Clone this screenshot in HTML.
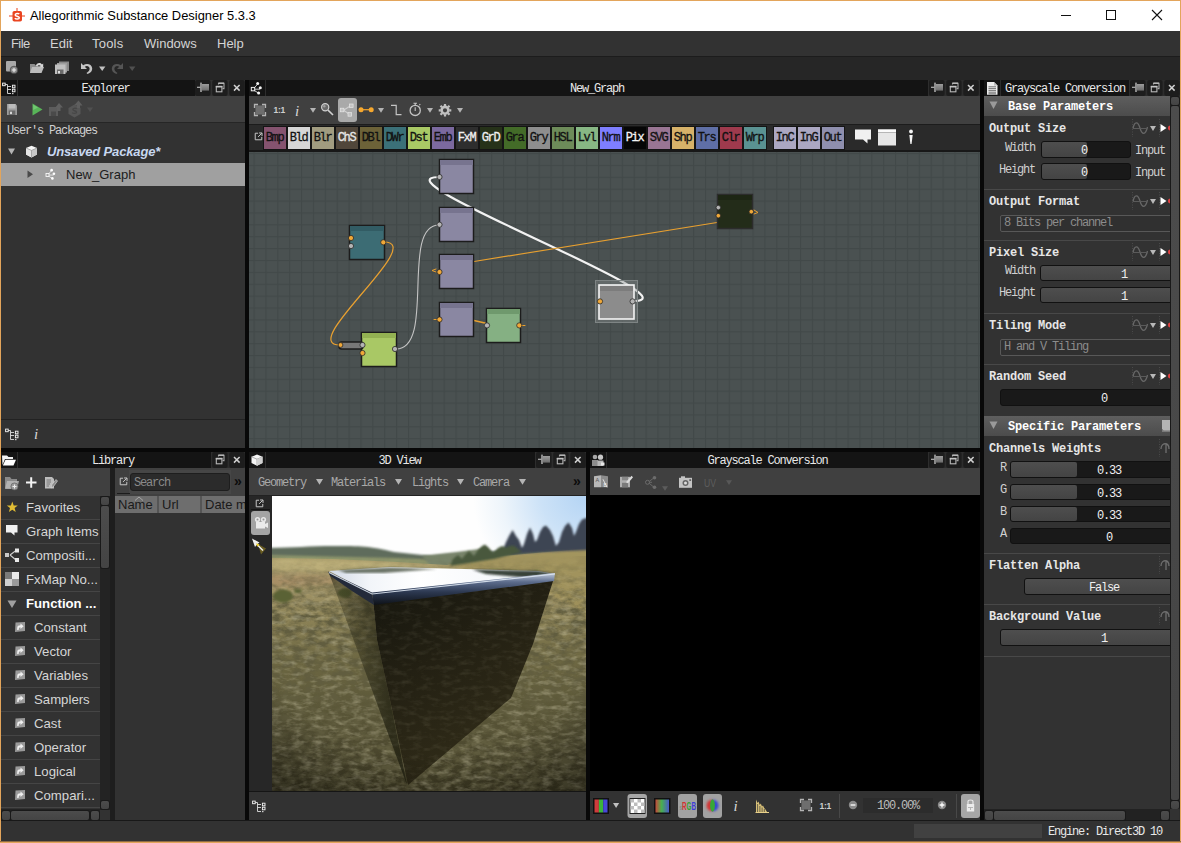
<!DOCTYPE html>
<html>
<head>
<meta charset="utf-8">
<title>Allegorithmic Substance Designer 5.3.3</title>
<style>
*{box-sizing:border-box;margin:0;padding:0}
html,body{width:1181px;height:843px;overflow:hidden;background:#e3a55b}
body{position:relative;font-family:"Liberation Sans",sans-serif;font-size:13px;color:#d8d8d8}
.abs,.abs-c>*{position:absolute}
#win{position:absolute;left:0;top:0;width:1181px;height:843px;background:#2d2d2d;overflow:hidden}
#win *{position:absolute}
.ss{font-family:"Liberation Mono",monospace;font-size:12px;letter-spacing:-1.2px;white-space:pre;line-height:14px;color:#d0d0d0}
.ssb{font-family:"Liberation Mono",monospace;font-size:12px;font-weight:bold;letter-spacing:-0.2px;white-space:pre;line-height:14px;color:#e6e6e6}
.ui{font-family:"Liberation Sans",sans-serif;font-size:13px;white-space:pre;color:#d4d4d4}
.dt{background:#141414;height:16px}
.dti{background:#141414;width:16px;height:16px}
.dtt{background:#141414;height:16px;text-align:center;color:#e8e8e8;overflow:hidden}
.db{background:#1b1b1b;width:16px;height:16px;border:1px solid #0c0c0c;border-radius:2px}
.tb{background:#404040}
.pnl{background:#323232}
.sep{background:#080808}
.lh{line-height:18px;font-size:13px}
.lr{line-height:18px;font-size:13.2px;color:#d6d6d6}
.sech{width:186px;height:20px;background:linear-gradient(#5e5e5e,#4c4c4c)}
.fld{background:#191919;border:1px solid #111;border-radius:3px}
.fill{background:linear-gradient(#4e4e4e,#444);border-radius:2px}
.val{text-align:center;color:#f0f0f0}
.cmb{height:17px;border:1px solid #585858;border-radius:2px;background:#303030;color:#8c8c8c;line-height:15px;padding-left:3px}
.sbt{background:linear-gradient(#4c4c4c,#444);border-radius:2px;box-shadow:0 0 0 1px #191919}
.pb{top:126px;width:24px;height:24px;border:1px solid #151515;text-align:center;line-height:22px;letter-spacing:-1.4px;text-indent:-1px;-webkit-text-stroke:0.3px currentColor}
</style>
</head>
<body>
<div id="win">
<svg width="0" height="0" style="left:0;top:0">
<defs>
<linearGradient id="pg" x1="0" y1="0" x2="0" y2="1"><stop offset="0" stop-color="#9c9c9c"/><stop offset="1" stop-color="#6c6c6c"/></linearGradient>
<symbol id="dbtn" viewBox="0 0 50 16">
<rect x="0" y="0" width="15.6" height="16" rx="2" fill="#1d1d1d"/><rect x="17.2" y="0" width="15.4" height="16" rx="2" fill="#1d1d1d"/><rect x="34.3" y="0" width="15.5" height="16" rx="2" fill="#1d1d1d"/>
<path d="M2,7.3H5.5" stroke="#b4b4b4" stroke-width="1.2"/><rect x="5.2" y="2.6" width="1.6" height="9.4" fill="#a8a8a8"/><rect x="6.8" y="4" width="7.2" height="6.6" fill="url(#pg)"/>
<path d="M23.5,4.6V3.4H29V8.6H27.6" fill="none" stroke="#a8a8a8" stroke-width="1.1"/><path d="M23.5,3.2H29" stroke="#b8b8b8" stroke-width="1.4"/>
<rect x="21.3" y="6.6" width="5.6" height="5.2" fill="none" stroke="#b8b8b8" stroke-width="1.1"/><path d="M20.8,6.6H27.4" stroke="#c4c4c4" stroke-width="1.6"/>
<path d="M39,5L44.6,10.6M44.6,5L39,10.6" stroke="#d0d0d0" stroke-width="1.5"/>
</symbol>
<symbol id="dbtn2" viewBox="17 0 33 16">
<rect x="17.2" y="0" width="15.4" height="16" rx="2" fill="#1d1d1d"/><rect x="34.3" y="0" width="15.5" height="16" rx="2" fill="#1d1d1d"/>
<path d="M23.5,4.6V3.4H29V8.6H27.6" fill="none" stroke="#a8a8a8" stroke-width="1.1"/><path d="M23.5,3.2H29" stroke="#b8b8b8" stroke-width="1.4"/>
<rect x="21.3" y="6.6" width="5.6" height="5.2" fill="none" stroke="#b8b8b8" stroke-width="1.1"/><path d="M20.8,6.6H27.4" stroke="#c4c4c4" stroke-width="1.6"/>
<path d="M39,5L44.6,10.6M44.6,5L39,10.6" stroke="#d0d0d0" stroke-width="1.5"/>
</symbol>
<symbol id="tri" viewBox="0 0 6 5"><path d="M0,0H6L3,4.8Z" fill="#b4b4b4"/></symbol>
<symbol id="gicon" viewBox="0 0 16 16">
<path d="M4,9.2L9,3.8M5,9.2H11M4.5,10L10,13.4" stroke="#d8d8d8" stroke-width="0.9" fill="none"/>
<rect x="2.3" y="7.4" width="3.4" height="3.4" fill="#222" stroke="#f0f0f0" stroke-width="1"/>
<circle cx="8.7" cy="3.6" r="1.5" fill="#f4f4f4"/><circle cx="11.3" cy="7.7" r="1.5" fill="#f4f4f4"/><circle cx="9.6" cy="13" r="1.5" fill="#f4f4f4"/>
</symbol>
</defs></svg>
<!-- TITLE BAR -->
<div id="titlebar" style="left:0;top:0;width:1181px;height:31px;background:#fff"></div>
<div id="title" class="ui" style="left:30px;top:7px;font-size:12.9px;color:#000;line-height:18px">Allegorithmic Substance Designer 5.3.3</div>
<!-- MENU BAR -->
<div id="menubar" style="left:0;top:31px;width:1181px;height:25px;background:#323232"></div>
<div class="ui" style="left:11px;top:35px;line-height:17px;letter-spacing:-0.6px">File</div>
<div class="ui" style="left:50px;top:35px;line-height:17px">Edit</div>
<div class="ui" style="left:92px;top:35px;line-height:17px;letter-spacing:0.2px">Tools</div>
<div class="ui" style="left:144px;top:35px;line-height:17px">Windows</div>
<div class="ui" style="left:217px;top:35px;line-height:17px">Help</div>
<!-- MAIN TOOLBAR -->
<div id="maintb" style="left:0;top:56px;width:1181px;height:24px;background:#262626;border-top:1px solid #1c1c1c"></div>
<!-- app icon & window controls -->
<svg style="left:8px;top:7px" width="18" height="18" viewBox="0 0 18 18"><path d="M1,9H17M9,1V4" stroke="#e8431c" stroke-width="1"/><rect x="4.5" y="4" width="9.5" height="10.5" rx="1.8" fill="#ea4420"/><path d="M11.2,7.2C10.6,6.2 7.2,6.1 7.2,7.9C7.2,9.6 11.3,8.9 11.3,10.8C11.3,12.5 7.6,12.4 6.9,11.2" fill="none" stroke="#fff" stroke-width="1.5"/></svg>
<svg style="left:1050px;top:5px" width="125" height="22" viewBox="1050 5 125 22"><path d="M1061,15.5H1071" stroke="#111" stroke-width="1"/><rect x="1106.5" y="10.5" width="9" height="9" fill="none" stroke="#111" stroke-width="1"/><path d="M1152,10L1162,20M1162,10L1152,20" stroke="#111" stroke-width="1.1"/></svg>
<!-- main toolbar icons -->
<svg style="left:1px;top:57px" width="140" height="22" viewBox="1 57 140 22">
<rect x="6" y="61" width="10" height="10.5" rx="1" fill="#a8a8a8"/><circle cx="14" cy="70" r="3.8" fill="#8c8c8c" stroke="#3a3a3a" stroke-width="0.7"/><path d="M12,70H16M14,68V72" stroke="#eee" stroke-width="1.1"/>
<path d="M30,64H34.5L36,65.5H41V73H30Z" fill="#8e8e8e"/><path d="M32,67H44L41.5,73H30Z" fill="#bcbcbc"/><path d="M36,66C36,62.5 41,62 42,64.5L43.2,63.5V67.2H39.6L40.8,66.2C40,64.6 37.6,64.8 37.6,66.6Z" fill="#d8d8d8"/>
<path d="M59,61.5H69V71H59Z" fill="#8a8a8a"/><path d="M57,63H67V72.5H57Z" fill="#9e9e9e"/><path d="M55,64.5H65.5V74H55Z" fill="#c0c0c0"/><rect x="57" y="69.5" width="6.5" height="4.5" fill="#6a6a6a"/><rect x="58" y="71" width="2" height="2.5" fill="#ddd"/>
<path d="M81,63V69H87L84.8,66.8C86.5,65.3 89.5,66 89.6,68.6C89.7,70.6 88.5,72 86.5,73L87.5,74C90.8,72.8 92.4,70.8 92.2,68.2C91.9,64 86.6,62.6 83.2,65.2Z" fill="#c4c4c4"/>
<path d="M99,66.5H105.4L102.2,71Z" fill="#c0c0c0"/>
<path d="M123,63V69H117L119.2,66.8C117.5,65.3 114.5,66 114.4,68.6C114.3,70.6 115.5,72 117.5,73L116.5,74C113.2,72.8 111.6,70.8 111.8,68.2C112.1,64 117.4,62.6 120.8,65.2Z" fill="#555"/>
<path d="M129,66.5H135.4L132.2,71Z" fill="#505050"/>
</svg>
<!-- PANELS inserted below -->
<!--EXPLORER-->
<div class="pnl" style="left:1px;top:80px;width:244px;height:368px"></div>
<div class="dti" style="left:1px;top:80px"></div>
<div class="dtt ss" style="left:18px;top:80px;width:177px;line-height:19px;text-indent:-2px">Explorer</div>
<svg style="left:195px;top:80px" width="50" height="16"><use href="#dbtn"/></svg>
<div class="tb" style="left:1px;top:96px;width:244px;height:27px;border-bottom:1px solid #262626"></div>
<div class="ss" style="left:7px;top:124px">User's Packages</div>
<div class="ui" style="left:47px;top:143px;line-height:17px;font-style:italic;font-weight:bold;color:#c8d8f0;font-size:13px;letter-spacing:-0.15px">Unsaved Package*</div>
<div style="left:1px;top:163px;width:244px;height:23px;background:#a0a0a0"></div>
<div class="ui" style="left:66px;top:166px;line-height:17px;color:#1c1c1c;font-size:13px">New_Graph</div>
<div style="left:1px;top:419px;width:244px;height:1px;background:#222"></div>
<div style="left:34px;top:425px;font-family:'Liberation Serif',serif;font-style:italic;font-size:15px;line-height:18px;color:#d8d8d8">i</div>
<svg style="left:2px;top:82px" width="15" height="14" viewBox="0 0 15 14"><path d="M3,2.5H5.5V11.5H9M5.5,4.5H9M5.5,7.5H9" fill="none" stroke="#dcdcdc" stroke-width="0.9"/><rect x="0.6" y="1.1" width="2.6" height="2.6" fill="#333" stroke="#f4f4f4" stroke-width="0.9"/><rect x="10.4" y="3.2" width="2.6" height="2.6" fill="#333" stroke="#f4f4f4" stroke-width="0.9"/><rect x="10.4" y="7.2" width="2.6" height="2.6" fill="#333" stroke="#f4f4f4" stroke-width="0.9"/><rect x="10.2" y="11" width="1.2" height="1.2" fill="#f4f4f4"/></svg>
<svg style="left:1px;top:96px" width="110" height="27" viewBox="1 96 110 27">
<path d="M7,104H15.5L17,105.5V115H7Z" fill="#9c9c9c"/><rect x="8.5" y="104" width="7" height="4.5" fill="#bcbcbc"/><rect x="8.7" y="110.5" width="6.6" height="4.5" fill="#6a6a6a"/><rect x="10" y="111.7" width="2" height="2.4" fill="#d8d8d8"/>
<path d="M32.5,103.5L42.5,109.5L32.5,115.5Z" fill="#58b458"/><path d="M33.2,104.8L38,107.6L33.2,110Z" fill="#7ed07e" opacity="0.7"/>
<path d="M49,107H58V116H49Z" fill="#5c5c5c"/><rect x="51" y="111.5" width="5" height="4.5" fill="#4a4a4a"/><path d="M55,108L59,103L63,107.5L60.5,107.5V111H57V107.8Z" fill="#606060"/>
<path d="M74.5,104.5L80.5,108V114L74.5,117.5L68.5,114V108Z" fill="#565656"/><path d="M76.8,108.9C76,108 72.8,107.9 72.8,109.6C72.8,111 76.6,110.5 76.6,112.2C76.6,113.7 73,113.7 72.2,112.6" fill="none" stroke="#474747" stroke-width="1.3"/><path d="M74.5,105L78.5,100.5L82.5,105.5H80V108H77V105.5Z" fill="#5e5e5e"/>
<path d="M87,107.5H93L90,112Z" fill="#505050"/>
</svg>
<svg style="left:8px;top:148px" width="8" height="7"><path d="M0,0.5H7L3.5,6.5Z" fill="#b4b4b4"/></svg>
<svg style="left:25px;top:145px" width="13" height="13" viewBox="0 0 13 13"><path d="M6.5,0.8L12,3V9.6L6.5,12.4L1,9.6V3Z" fill="#f6f6f6"/><path d="M6.5,5.4L12,3V9.6L6.5,12.4Z" fill="#c8c8c8"/><path d="M1,3L6.5,5.4V12.4L1,9.6Z" fill="#e4e4e4"/><path d="M1,3L6.5,5.4L12,3M6.5,5.4V12.4" stroke="#8c8c8c" stroke-width="0.7" fill="none"/></svg>
<svg style="left:27px;top:170px" width="7" height="9"><path d="M0.5,0.5L6,4.2L0.5,8Z" fill="#4a4a4a"/></svg>
<svg style="left:44px;top:167px" width="14" height="14" viewBox="0 0 16 16"><path d="M4,9.2L9,3.8M5,9.2H11M4.5,10L10,13.4" stroke="#f0f0f0" stroke-width="0.9" fill="none"/>
<rect x="2.3" y="7.4" width="3.4" height="3.4" fill="#a0a0a0" stroke="#fafafa" stroke-width="1"/>
<circle cx="8.7" cy="3.6" r="1.5" fill="#fff"/><circle cx="11.3" cy="7.7" r="1.5" fill="#fff"/><circle cx="9.6" cy="13" r="1.5" fill="#fff"/></svg>
<svg style="left:5px;top:428px" width="15" height="14" viewBox="0 0 15 14"><path d="M3,2.5H5.5V11.5H9M5.5,4.5H9M5.5,7.5H9" fill="none" stroke="#dcdcdc" stroke-width="0.9"/><rect x="0.6" y="1.1" width="2.6" height="2.6" fill="#333" stroke="#f4f4f4" stroke-width="0.9"/><rect x="10.4" y="3.2" width="2.6" height="2.6" fill="#333" stroke="#f4f4f4" stroke-width="0.9"/><rect x="10.4" y="7.2" width="2.6" height="2.6" fill="#333" stroke="#f4f4f4" stroke-width="0.9"/><rect x="10.2" y="11" width="1.2" height="1.2" fill="#f4f4f4"/></svg>
<div class="sep" style="left:245px;top:80px;width:4px;height:740px"></div>
<div class="sep" style="left:1px;top:448px;width:245px;height:4px"></div>
<!--GRAPH-->
<div class="dti" style="left:249px;top:80px"></div>
<div class="dtt ss" style="left:266px;top:80px;width:662px;line-height:19px">New_Graph</div>
<svg style="left:929px;top:80px" width="50" height="16"><use href="#dbtn"/></svg>
<svg style="left:249px;top:80px" width="16" height="16"><use href="#gicon"/></svg>
<div class="tb" style="left:249px;top:96px;width:731px;height:28px"></div>
<div style="left:338px;top:98px;width:19px;height:24px;background:#a9a9a9;border-radius:3px"></div>
<svg style="left:249px;top:96px" width="240" height="28" viewBox="249 96 240 28">
<rect x="255.5" y="105.5" width="9" height="9" fill="#6e6e6e"/>
<path d="M254.5,108V104.5H258M262,104.5H265.5V108M265.5,112V115.5H262M258,115.5H254.5V112" fill="none" stroke="#b4b4b4" stroke-width="1.3"/>
<text x="273.5" y="113.2" font-family="Liberation Sans,sans-serif" font-weight="bold" font-size="8.5" fill="#cfcfcf" letter-spacing="-0.3">1:1</text>
<text x="295" y="115.5" font-family="Liberation Serif,serif" font-style="italic" font-size="15" fill="#d8d8d8">i</text>
<use href="#tri" x="310" y="108" width="6" height="5"/>
<circle cx="325.2" cy="107.3" r="3.6" fill="#6a6a6a" stroke="#d0d0d0" stroke-width="1.2"/><circle cx="324.3" cy="106.3" r="1.2" fill="#a0a0a0"/>
<path d="M328,110.2L333,115" stroke="#d0d0d0" stroke-width="1.6"/>
<path d="M343.5,110.2L351,105.5M344,110.5L349,114" stroke="#d0d0d0" stroke-width="1.1" fill="none"/>
<rect x="340.3" y="108.2" width="3.6" height="3.6" fill="#c4c4c4" stroke="#e6e6e6" stroke-width="0.7"/><rect x="349.5" y="104" width="3.6" height="3.6" fill="#c4c4c4" stroke="#e6e6e6" stroke-width="0.7"/><rect x="348" y="112.6" width="3.6" height="3.6" fill="#c4c4c4" stroke="#e6e6e6" stroke-width="0.7"/>
<path d="M361,109.7H371" stroke="#f0a22c" stroke-width="1.2"/><circle cx="361" cy="109.7" r="2.5" fill="#f6a82e"/><circle cx="371.2" cy="109.7" r="2.5" fill="#f6a82e"/>
<use href="#tri" x="378" y="108" width="6" height="5"/>
<path d="M391,105.4H396.2V114.6H401.5" fill="none" stroke="#c4c4c4" stroke-width="1.2"/>
<circle cx="415.2" cy="110.4" r="5.1" fill="none" stroke="#c4c4c4" stroke-width="1.3"/><path d="M413.5,103.2H417M415.2,103.5V105.4M415.2,107.2V111M419.3,105.2L420.3,104.2" stroke="#c4c4c4" stroke-width="1.1"/>
<use href="#tri" x="427" y="108" width="6" height="5"/>
<circle cx="445" cy="110.3" r="3.4" fill="none" stroke="#c0c0c0" stroke-width="2.6"/>
<g stroke="#c0c0c0" stroke-width="2.2"><path d="M445,104V106M445,114.6V116.6M438.7,110.3H440.7M449.3,110.3H451.3M440.5,105.8L442,107.3M448,113.3L449.5,114.8M449.5,105.8L448,107.3M442,113.3L440.5,114.8"/></g>
<use href="#tri" x="457" y="108" width="6" height="5"/>
</svg>
<div id="palbar" style="left:249px;top:124px;width:731px;height:28px;background:#2a2a2a;border-top:1px solid #1c1c1c;border-bottom:2px solid #181818"></div>
<div class="pb ss" style="left:263px;background:#85536f;color:#111">Bmp</div>
<div class="pb ss" style="left:287px;background:#d6d6d6;color:#111">Bld</div>
<div class="pb ss" style="left:311px;background:#a19c80;color:#111">Blr</div>
<div class="pb ss" style="left:335px;background:#50463a;color:#e8e8e8">ChS</div>
<div class="pb ss" style="left:359px;background:#6c6238;color:#111">DBl</div>
<div class="pb ss" style="left:383px;background:#3b7078;color:#111">DWr</div>
<div class="pb ss" style="left:407px;background:#a9c965;color:#111">Dst</div>
<div class="pb ss" style="left:431px;background:#7b699f;color:#111">Emb</div>
<div class="pb ss" style="left:455px;background:#2e2e2e;color:#f0f0f0">FxM</div>
<div class="pb ss" style="left:479px;background:#263219;color:#f0f0f0">GrD</div>
<div class="pb ss" style="left:503px;background:#436b28;color:#111">Gra</div>
<div class="pb ss" style="left:527px;background:#8e8e8e;color:#111">Gry</div>
<div class="pb ss" style="left:551px;background:#6d8b59;color:#111">HSL</div>
<div class="pb ss" style="left:575px;background:#87b784;color:#111">Lvl</div>
<div class="pb ss" style="left:599px;background:#7e7eff;color:#111">Nrm</div>
<div class="pb ss" style="left:623px;background:#060606;color:#f4f4f4">Pix</div>
<div class="pb ss" style="left:647px;background:#997593;color:#111">SVG</div>
<div class="pb ss" style="left:671px;background:#d7b269;color:#111">Shp</div>
<div class="pb ss" style="left:695px;background:#5f6fa6;color:#111">Trs</div>
<div class="pb ss" style="left:719px;background:#9f3a4d;color:#111">Clr</div>
<div class="pb ss" style="left:743px;background:#5a9292;color:#111">Wrp</div>
<div class="pb ss" style="left:773px;background:#aba7c2;color:#111">InC</div>
<div class="pb ss" style="left:797px;background:#aba7c2;color:#111">InG</div>
<div class="pb ss" style="left:821px;background:#8f8fae;color:#111">Out</div>
<svg style="left:850px;top:124px" width="75" height="28" viewBox="850 124 75 28">
<path d="M855,129.5H871V139.5H867.5V143.5L863,139.5H855Z" fill="#f0f0f0"/>
<rect x="878" y="129.5" width="18" height="16" fill="#e6e6e6"/><rect x="878" y="129.5" width="18" height="2.5" fill="#fafafa"/><path d="M878,132.5H896" stroke="#aaa" stroke-width="0.8"/>
<circle cx="911" cy="131.5" r="1.9" fill="#f4f4f4"/><path d="M909.3,135H912.7L911.6,144H910.4Z" fill="#f4f4f4"/>
</svg>
<svg style="left:254px;top:132px" width="9" height="9" viewBox="0 0 11 11"><path d="M5,1.5H1.5V9.5H9.5V6" fill="none" stroke="#c8c8c8" stroke-width="1.2"/><path d="M5,6L9.5,1.5M6.2,1.2H9.8V4.8" fill="none" stroke="#c8c8c8" stroke-width="1.2"/></svg>
<div id="gview" style="left:249px;top:152px;width:731px;height:296px;background-color:#4a5151"></div>
<svg id="gsvg" style="left:249px;top:152px" width="731" height="296" viewBox="249 152 731 296">
<defs><pattern id="grid" x="253.5" y="164.9" width="11.88" height="11.88" patternUnits="userSpaceOnUse"><path d="M0.6,0V11.88M0,0.6H11.88" stroke="#424949" stroke-width="1.3" fill="none"/></pattern></defs>
<rect x="249" y="152" width="731" height="296" fill="url(#grid)"/>
<g fill="none" stroke-linecap="round">
<path d="M633,301 C703,301 369,177 439.5,177" stroke="#f2f2f2" stroke-width="2.2"/>
<path d="M384,242 C428,242 296,345 340,345" stroke="#e8a030" stroke-width="1.2"/>
<path d="M396,349 C436,349 400,225 439,225" stroke="#c4c4c4" stroke-width="1.1"/>
<path d="M474,261.5 L717,222.5" stroke="#e8a030" stroke-width="1.2"/>
<path d="M474,320.5 L487,323.5" stroke="#e8a030" stroke-width="1.5"/>
<path d="M436,269 L432,270.5 L436,272" stroke="#e8a030" stroke-width="1"/>
<path d="M434,319.5 L437,319.5" stroke="#e8a030" stroke-width="1"/>
<path d="M522,325.5 L525,325.5" stroke="#e8a030" stroke-width="1"/>
<path d="M754,210 L758,212.5 L754,214" stroke="#e8a030" stroke-width="1"/>
</g>
<g stroke="#1c1c1c" stroke-width="1.5">
<rect x="439.5" y="159.5" width="34" height="34" fill="#8a87a2"/><rect x="440" y="160" width="33" height="5" fill="#77748f" stroke="none"/>
<rect x="439.5" y="207.5" width="34" height="34" fill="#8a87a2"/><rect x="440" y="208" width="33" height="5" fill="#77748f" stroke="none"/>
<rect x="439.5" y="254.5" width="34" height="34" fill="#8a87a2"/><rect x="440" y="255" width="33" height="5" fill="#77748f" stroke="none"/>
<rect x="439.5" y="302.5" width="34" height="34" fill="#8a87a2"/><rect x="440" y="303" width="33" height="5" fill="#77748f" stroke="none"/>
<rect x="349.5" y="225.5" width="35" height="34" fill="#3c6c74"/><rect x="350" y="226" width="34" height="5" fill="#325c64" stroke="none"/>
<rect x="361.5" y="332.5" width="35" height="34" fill="#a9c865"/><rect x="362" y="333" width="34" height="5" fill="#93b152" stroke="none"/>
<rect x="486.5" y="308.5" width="34" height="34" fill="#85b083"/><rect x="487" y="309" width="33" height="5" fill="#6f996d" stroke="none"/>
<rect x="717.5" y="194.5" width="35" height="34" fill="#232c19" stroke="#2c2c2c"/><rect x="718" y="195" width="34" height="5" fill="#1d2614" stroke="none"/>
<rect x="339" y="342" width="24" height="7" rx="2.5" fill="#787878"/>
</g>
<rect x="595.5" y="280.5" width="42" height="42" fill="#8a8f8f" fill-opacity="0.4" stroke="#7e8484" stroke-width="1"/>
<rect x="599" y="285" width="35" height="34" fill="#8c8c8c" stroke="#f4f4f4" stroke-width="1.6"/><rect x="600" y="286" width="33" height="5" fill="#7c7c7c"/>
<g stroke="#2a2a2a" stroke-width="0.8">
<g fill="#b4b4b4">
<circle cx="439.5" cy="177" r="2.6"/><circle cx="439.5" cy="224.7" r="2.6"/>
<circle cx="351" cy="246" r="2.6"/><circle cx="362.5" cy="345" r="2.6"/><circle cx="395" cy="349" r="2.6"/>
<circle cx="487" cy="325.4" r="2.6"/><circle cx="632.6" cy="301.4" r="2.6"/><circle cx="718.3" cy="207.6" r="2.3"/>
</g>
<g fill="#f0a838">
<circle cx="439.5" cy="272" r="2.6"/><circle cx="439.5" cy="319.5" r="2.6"/>
<circle cx="351" cy="238" r="2.6"/><circle cx="383.3" cy="242.3" r="2.6"/><circle cx="362.5" cy="353" r="2.6"/><circle cx="340.5" cy="345" r="2.4"/>
<circle cx="519.3" cy="325.4" r="2.6"/><circle cx="600" cy="301.4" r="2.6"/><circle cx="718.3" cy="215.7" r="2.3"/><circle cx="751.3" cy="211.7" r="2.3"/>
</g>
</g>
</svg>
<div class="sep" style="left:249px;top:448px;width:731px;height:4px"></div>
<div class="sep" style="left:980px;top:80px;width:4px;height:740px"></div>
<!--PROPS-->
<div class="pnl" style="left:984px;top:96px;width:195px;height:725px"></div>
<div class="dti" style="left:984px;top:80px"></div>
<div class="dtt ss" style="left:1001px;top:80px;width:128px;line-height:19px;text-align:left;padding-left:4px">Grayscale Conversion</div>
<svg style="left:1130px;top:80px" width="50" height="16"><use href="#dbtn"/></svg>
<svg style="left:984px;top:80px" width="16" height="16" viewBox="0 0 16 16"><path d="M3,2H10L13.5,5.5V14.8H3Z" fill="#ececec"/><path d="M10,2V5.5H13.5" fill="#bbb"/><path d="M4.5,6.8H12M4.5,8.6H12M4.5,10.4H12M4.5,12.2H12M4.5,13.8H12" stroke="#555" stroke-width="0.8"/></svg>
<div class="sech" style="left:984px;top:96px"></div>
<svg style="left:989px;top:101px" width="10" height="9"><path d="M0.5,0.5H8.5L4.5,8Z" fill="#9a9a9a"/></svg>
<div class="ssb" style="left:1008px;top:100px;color:#fff">Base Parameters</div>
<div class="ssb" style="left:989px;top:122px">Output Size</div>
<svg style="left:1130px;top:119px" width="40" height="18" viewBox="0 0 40 18"><path d="M2.5,0V18M29.5,0V18" stroke="#4a4a4a" stroke-width="1" stroke-dasharray="1,1.5"/><path d="M3,9.5C4.5,2 8,2 10,9S15.5,16.5 17.5,8" fill="none" stroke="#686868" stroke-width="1.3"/><path d="M3,9.5H17.5" stroke="#5a5a5a" stroke-width="1"/><path d="M20,7H26L23,12Z" fill="#b8b8b8"/><path d="M30.5,5L36.5,9L30.5,13Z" fill="#fff"/><circle cx="40.5" cy="9" r="2.6" fill="#e04040"/></svg>
<div class="ss" style="left:1005px;top:141px">Width</div>
<div class="fld" style="left:1041px;top:141px;width:90px;height:17px"></div>
<div class="fill" style="left:1042px;top:142px;width:45px;height:15px"></div>
<div class="ss val" style="left:1064px;top:144px;width:40px">0</div>
<div class="ss" style="left:1135px;top:144px">Input</div>
<div class="ss" style="left:999px;top:163px">Height</div>
<div class="fld" style="left:1041px;top:163px;width:90px;height:17px"></div>
<div class="fill" style="left:1042px;top:164px;width:45px;height:15px"></div>
<div class="ss val" style="left:1064px;top:166px;width:40px">0</div>
<div class="ss" style="left:1135px;top:166px">Input</div>
<div style="left:984px;top:189px;width:186px;height:1px;background:#484848"></div>
<div class="ssb" style="left:989px;top:195px">Output Format</div>
<svg style="left:1130px;top:192px" width="40" height="18" viewBox="0 0 40 18"><path d="M2.5,0V18M29.5,0V18" stroke="#4a4a4a" stroke-width="1" stroke-dasharray="1,1.5"/><path d="M3,9.5C4.5,2 8,2 10,9S15.5,16.5 17.5,8" fill="none" stroke="#686868" stroke-width="1.3"/><path d="M3,9.5H17.5" stroke="#5a5a5a" stroke-width="1"/><path d="M20,7H26L23,12Z" fill="#b8b8b8"/><path d="M30.5,5L36.5,9L30.5,13Z" fill="#fff"/><circle cx="40.5" cy="9" r="2.6" fill="#e04040"/></svg>
<div class="cmb ss" style="left:1000px;top:215px;width:175px">8 Bits per channel</div>
<div style="left:984px;top:240px;width:186px;height:1px;background:#484848"></div>
<div class="ssb" style="left:989px;top:246px">Pixel Size</div>
<svg style="left:1130px;top:243px" width="40" height="18" viewBox="0 0 40 18"><path d="M2.5,0V18M29.5,0V18" stroke="#4a4a4a" stroke-width="1" stroke-dasharray="1,1.5"/><path d="M3,9.5C4.5,2 8,2 10,9S15.5,16.5 17.5,8" fill="none" stroke="#686868" stroke-width="1.3"/><path d="M3,9.5H17.5" stroke="#5a5a5a" stroke-width="1"/><path d="M20,7H26L23,12Z" fill="#b8b8b8"/><path d="M30.5,5L36.5,9L30.5,13Z" fill="#fff"/><circle cx="40.5" cy="9" r="2.6" fill="#e04040"/></svg>
<div class="ss" style="left:1005px;top:264px">Width</div>
<div class="fld" style="left:1040px;top:265px;width:140px;height:16px"></div>
<div class="fill" style="left:1041px;top:266px;width:138px;height:14px"></div>
<div class="ss val" style="left:1104px;top:268px;width:40px">1</div>
<div class="ss" style="left:999px;top:286px">Height</div>
<div class="fld" style="left:1040px;top:287px;width:140px;height:16px"></div>
<div class="fill" style="left:1041px;top:288px;width:138px;height:14px"></div>
<div class="ss val" style="left:1104px;top:290px;width:40px">1</div>
<div style="left:984px;top:313px;width:186px;height:1px;background:#484848"></div>
<div class="ssb" style="left:989px;top:319px">Tiling Mode</div>
<svg style="left:1130px;top:316px" width="40" height="18" viewBox="0 0 40 18"><path d="M2.5,0V18M29.5,0V18" stroke="#4a4a4a" stroke-width="1" stroke-dasharray="1,1.5"/><path d="M3,9.5C4.5,2 8,2 10,9S15.5,16.5 17.5,8" fill="none" stroke="#686868" stroke-width="1.3"/><path d="M3,9.5H17.5" stroke="#5a5a5a" stroke-width="1"/><path d="M20,7H26L23,12Z" fill="#b8b8b8"/><path d="M30.5,5L36.5,9L30.5,13Z" fill="#fff"/><circle cx="40.5" cy="9" r="2.6" fill="#e04040"/></svg>
<div class="cmb ss" style="left:1000px;top:339px;width:175px">H and V Tiling</div>
<div style="left:984px;top:364px;width:186px;height:1px;background:#484848"></div>
<div class="ssb" style="left:989px;top:370px">Random Seed</div>
<svg style="left:1130px;top:367px" width="40" height="18" viewBox="0 0 40 18"><path d="M2.5,0V18M29.5,0V18" stroke="#4a4a4a" stroke-width="1" stroke-dasharray="1,1.5"/><path d="M3,9.5C4.5,2 8,2 10,9S15.5,16.5 17.5,8" fill="none" stroke="#686868" stroke-width="1.3"/><path d="M3,9.5H17.5" stroke="#5a5a5a" stroke-width="1"/><path d="M20,7H26L23,12Z" fill="#b8b8b8"/><path d="M30.5,5L36.5,9L30.5,13Z" fill="#fff"/><circle cx="40.5" cy="9" r="2.6" fill="#e04040"/></svg>
<div class="fld" style="left:1000px;top:389px;width:180px;height:17px"></div>
<div class="ss val" style="left:1084px;top:392px;width:40px">0</div>
<div class="sech" style="left:984px;top:416px"></div>
<svg style="left:989px;top:421px" width="10" height="9"><path d="M0.5,0.5H8.5L4.5,8Z" fill="#9a9a9a"/></svg>
<div class="ssb" style="left:1008px;top:420px;color:#fff">Specific Parameters</div>
<svg style="left:1161px;top:419px" width="9" height="14"><path d="M1,1H9V12H3L1,10Z" fill="#b4b4b4"/><path d="M1,12H9" stroke="#888" stroke-width="1.5"/></svg>
<div class="ssb" style="left:989px;top:442px">Channels Weights</div>
<svg style="left:1158px;top:439px" width="12" height="18" viewBox="0 0 12 18"><path d="M1.5,0V18" stroke="#4a4a4a" stroke-width="1" stroke-dasharray="1,1.5"/><path d="M3,10C3,3 11,3 11,10M8,5V14" fill="none" stroke="#707070" stroke-width="1.3"/></svg>
<div class="ss" style="left:1000px;top:461px">R</div>
<div class="fld" style="left:1010px;top:461px;width:170px;height:17px"></div>
<div class="fill" style="left:1011px;top:462px;width:66px;height:15px"></div>
<div class="ss val" style="left:1089px;top:464px;width:40px">0.33</div>
<div class="ss" style="left:1000px;top:483px">G</div>
<div class="fld" style="left:1010px;top:484px;width:170px;height:16px"></div>
<div class="fill" style="left:1011px;top:485px;width:66px;height:14px"></div>
<div class="ss val" style="left:1089px;top:487px;width:40px">0.33</div>
<div class="ss" style="left:1000px;top:505px">B</div>
<div class="fld" style="left:1010px;top:506px;width:170px;height:16px"></div>
<div class="fill" style="left:1011px;top:507px;width:66px;height:14px"></div>
<div class="ss val" style="left:1089px;top:509px;width:40px">0.33</div>
<div class="ss" style="left:1000px;top:527px">A</div>
<div class="fld" style="left:1010px;top:528px;width:170px;height:16px"></div>
<div class="ss val" style="left:1089px;top:531px;width:40px">0</div>
<div style="left:984px;top:553px;width:186px;height:1px;background:#484848"></div>
<div class="ssb" style="left:989px;top:559px">Flatten Alpha</div>
<svg style="left:1158px;top:556px" width="12" height="18" viewBox="0 0 12 18"><path d="M1.5,0V18" stroke="#4a4a4a" stroke-width="1" stroke-dasharray="1,1.5"/><path d="M3,10C3,3 11,3 11,10M8,5V14" fill="none" stroke="#707070" stroke-width="1.3"/></svg>
<div class="fld" style="left:1024px;top:578px;width:156px;height:17px"></div><div class="fill" style="left:1025px;top:579px;width:154px;height:15px"></div><div class="ss val" style="left:1084px;top:581px;width:40px">False</div>
<div style="left:984px;top:604px;width:186px;height:1px;background:#484848"></div>
<div class="ssb" style="left:989px;top:610px">Background Value</div>
<svg style="left:1158px;top:607px" width="12" height="18" viewBox="0 0 12 18"><path d="M1.5,0V18" stroke="#4a4a4a" stroke-width="1" stroke-dasharray="1,1.5"/><path d="M3,10C3,3 11,3 11,10M8,5V14" fill="none" stroke="#707070" stroke-width="1.3"/></svg>
<div class="fld" style="left:1000px;top:629px;width:180px;height:17px"></div>
<div class="fill" style="left:1001px;top:630px;width:178px;height:15px"></div>
<div class="ss val" style="left:1084px;top:632px;width:40px">1</div>
<div style="left:984px;top:656px;width:186px;height:1px;background:#484848"></div>
<div style="left:1170px;top:96px;width:9px;height:725px;background:#222"></div>
<div class="sbt" style="left:1171px;top:97px;width:8px;height:8px"></div>
<div class="sbt" style="left:1171px;top:106px;width:8px;height:694px"></div>
<div class="sbt" style="left:1171px;top:801px;width:8px;height:8px"></div>
<div style="left:984px;top:809px;width:186px;height:12px;background:#222"></div>
<div class="sbt" style="left:985px;top:811px;width:8px;height:9px"></div>
<div class="sbt" style="left:994px;top:811px;width:131px;height:9px"></div>
<div class="sbt" style="left:1161px;top:811px;width:8px;height:9px"></div>
<div style="left:1170px;top:809px;width:9px;height:12px;background:#323232"></div>
<!--LIBRARY-->
<div class="pnl" style="left:1px;top:468px;width:244px;height:352px"></div>
<div class="dti" style="left:1px;top:452px"></div>
<div class="dtt ss" style="left:18px;top:452px;width:193px;line-height:19px;text-indent:-3px">Library</div>
<svg style="left:212px;top:452px" width="33" height="16"><use href="#dbtn2"/></svg>
<svg style="left:1px;top:452px" width="16" height="16" viewBox="0 0 16 16"><path d="M1,3.5H6L7.5,5H12V7H4L1.5,13Z" fill="#f4f4f4"/><path d="M4.5,7.8H15L12.5,13.5H1.8Z" fill="#fff"/></svg>
<div class="tb" style="left:1px;top:468px;width:109px;height:28px"></div>
<div class="tb" style="left:115px;top:468px;width:130px;height:28px"></div>
<div style="left:110px;top:468px;width:5px;height:352px;background:#1e1e1e"></div>
<svg style="left:1px;top:468px" width="109" height="28" viewBox="1 468 109 28">
<path d="M5,477H10L11.5,479H17V488H5Z" fill="#8a8a8a"/><path d="M7,481H19L17,489H5Z" fill="#b8b8b8" opacity="0.85"/><circle cx="14.5" cy="486.5" r="3.6" fill="#9a9a9a" stroke="#555" stroke-width="0.6"/><path d="M12.5,486.5H16.5M14.5,484.5V488.5" stroke="#eee" stroke-width="1"/>
<path d="M26,482.5H36.5M31.2,477.2V487.8" stroke="#f4f4f4" stroke-width="2"/>
<path d="M45,477H52L54,479V488.5H45Z" fill="#bdbdbd"/><path d="M46.5,480H51M46.5,482H51M46.5,484H50M46.5,486H49" stroke="#666" stroke-width="0.8"/><path d="M51,488L52,484.5L56,479.5L57.5,481L53.5,486.5Z" fill="#8a8a8a" stroke="#ddd" stroke-width="0.6"/>
</svg>
<div style="left:129px;top:470px;width:102px;height:24px;background:#464646"></div>
<svg style="left:119px;top:477px" width="9" height="9" viewBox="0 0 11 11"><path d="M5,1.5H1.5V9.5H9.5V6" fill="none" stroke="#c8c8c8" stroke-width="1.2"/><path d="M5,6L9.5,1.5M6.2,1.2H9.8V4.8" fill="none" stroke="#c8c8c8" stroke-width="1.2"/></svg>
<div style="left:117px;top:493px;width:13px;height:1px;background:#1c1c1c"></div>
<div style="left:130px;top:473px;width:100px;height:18px;background:#2b2b2b;border:1px solid #1e1e1e;border-radius:3px"></div>
<div class="ss" style="left:134px;top:476px;color:#8a8a8a">Search</div>
<div class="ui" style="left:234px;top:472px;color:#0c0c0c;font-size:14px;line-height:18px;font-weight:bold">»</div>
<div style="left:115px;top:496px;width:130px;height:17px;background:#6e6e6e"></div>
<div style="left:157px;top:496px;width:2px;height:17px;background:#555"></div>
<div style="left:200px;top:496px;width:2px;height:17px;background:#555"></div>

<svg style="left:134px;top:496px" width="10" height="5"><path d="M1,4.5L5,1L9,4.5" fill="none" stroke="#a8a8a8" stroke-width="1"/></svg>
<div class="ui lh" style="left:118px;top:496px;color:#1a1a1a">Name</div>
<div class="ui lh" style="left:162px;top:496px;color:#1a1a1a">Url</div>
<div class="ui lh" style="left:205px;top:496px;color:#1a1a1a;width:40px;overflow:hidden">Date m</div>
<div style="left:1px;top:519px;width:99px;height:1px;background:#454545"></div>
<div class="ui lr" style="left:26px;top:499px">Favorites</div>
<div style="left:1px;top:543px;width:99px;height:1px;background:#454545"></div>
<div class="ui lr" style="left:26px;top:523px">Graph Items</div>
<div style="left:1px;top:567px;width:99px;height:1px;background:#454545"></div>
<div class="ui lr" style="left:26px;top:547px">Compositi...</div>
<div style="left:1px;top:591px;width:99px;height:1px;background:#454545"></div>
<div class="ui lr" style="left:26px;top:571px">FxMap No...</div>
<div style="left:1px;top:615px;width:99px;height:1px;background:#454545"></div>
<div class="ui lr" style="left:26px;top:595px;font-weight:bold;color:#fff">Function ...</div>
<svg style="left:7px;top:600px" width="11" height="9"><path d="M0.5,0.5H9.5L5,8Z" fill="#a0a0a0"/></svg>
<div style="left:1px;top:639px;width:99px;height:1px;background:#454545"></div>
<div class="ui lr" style="left:34px;top:619px">Constant</div>
<svg style="left:14px;top:621px" width="12" height="12" viewBox="0 0 12 12"><path d="M1.5,1.5L11,1V10L1,11Z" fill="#9a9a9a"/><path d="M3.2,9V7C3.2,5 4.5,4.3 6.5,4.3V2.6L9.6,5.3L6.5,8V6.2C5.2,6.2 4.8,6.8 4.6,9Z" fill="#f0f0f0"/></svg>
<div style="left:1px;top:663px;width:99px;height:1px;background:#454545"></div>
<div class="ui lr" style="left:34px;top:643px">Vector</div>
<svg style="left:14px;top:645px" width="12" height="12" viewBox="0 0 12 12"><path d="M1.5,1.5L11,1V10L1,11Z" fill="#9a9a9a"/><path d="M3.2,9V7C3.2,5 4.5,4.3 6.5,4.3V2.6L9.6,5.3L6.5,8V6.2C5.2,6.2 4.8,6.8 4.6,9Z" fill="#f0f0f0"/></svg>
<div style="left:1px;top:687px;width:99px;height:1px;background:#454545"></div>
<div class="ui lr" style="left:34px;top:667px">Variables</div>
<svg style="left:14px;top:669px" width="12" height="12" viewBox="0 0 12 12"><path d="M1.5,1.5L11,1V10L1,11Z" fill="#9a9a9a"/><path d="M3.2,9V7C3.2,5 4.5,4.3 6.5,4.3V2.6L9.6,5.3L6.5,8V6.2C5.2,6.2 4.8,6.8 4.6,9Z" fill="#f0f0f0"/></svg>
<div style="left:1px;top:711px;width:99px;height:1px;background:#454545"></div>
<div class="ui lr" style="left:34px;top:691px">Samplers</div>
<svg style="left:14px;top:693px" width="12" height="12" viewBox="0 0 12 12"><path d="M1.5,1.5L11,1V10L1,11Z" fill="#9a9a9a"/><path d="M3.2,9V7C3.2,5 4.5,4.3 6.5,4.3V2.6L9.6,5.3L6.5,8V6.2C5.2,6.2 4.8,6.8 4.6,9Z" fill="#f0f0f0"/></svg>
<div style="left:1px;top:735px;width:99px;height:1px;background:#454545"></div>
<div class="ui lr" style="left:34px;top:715px">Cast</div>
<svg style="left:14px;top:717px" width="12" height="12" viewBox="0 0 12 12"><path d="M1.5,1.5L11,1V10L1,11Z" fill="#9a9a9a"/><path d="M3.2,9V7C3.2,5 4.5,4.3 6.5,4.3V2.6L9.6,5.3L6.5,8V6.2C5.2,6.2 4.8,6.8 4.6,9Z" fill="#f0f0f0"/></svg>
<div style="left:1px;top:759px;width:99px;height:1px;background:#454545"></div>
<div class="ui lr" style="left:34px;top:739px">Operator</div>
<svg style="left:14px;top:741px" width="12" height="12" viewBox="0 0 12 12"><path d="M1.5,1.5L11,1V10L1,11Z" fill="#9a9a9a"/><path d="M3.2,9V7C3.2,5 4.5,4.3 6.5,4.3V2.6L9.6,5.3L6.5,8V6.2C5.2,6.2 4.8,6.8 4.6,9Z" fill="#f0f0f0"/></svg>
<div style="left:1px;top:783px;width:99px;height:1px;background:#454545"></div>
<div class="ui lr" style="left:34px;top:763px">Logical</div>
<svg style="left:14px;top:765px" width="12" height="12" viewBox="0 0 12 12"><path d="M1.5,1.5L11,1V10L1,11Z" fill="#9a9a9a"/><path d="M3.2,9V7C3.2,5 4.5,4.3 6.5,4.3V2.6L9.6,5.3L6.5,8V6.2C5.2,6.2 4.8,6.8 4.6,9Z" fill="#f0f0f0"/></svg>
<div style="left:1px;top:807px;width:99px;height:1px;background:#454545"></div>
<div class="ui lr" style="left:34px;top:787px">Compari...</div>
<svg style="left:14px;top:789px" width="12" height="12" viewBox="0 0 12 12"><path d="M1.5,1.5L11,1V10L1,11Z" fill="#9a9a9a"/><path d="M3.2,9V7C3.2,5 4.5,4.3 6.5,4.3V2.6L9.6,5.3L6.5,8V6.2C5.2,6.2 4.8,6.8 4.6,9Z" fill="#f0f0f0"/></svg>
<svg style="left:1px;top:496px" width="24" height="96" viewBox="1 496 24 96">
<path d="M12.3,501.5L13.7,505.4L17.8,505.5L14.6,508.0L15.7,512.0L12.3,509.7L8.9,512.0L10.0,508.0L6.8,505.5L10.9,505.4Z" fill="#e0bc34"/>
<path d="M6,525H17.5V532.5H14.5V535.5L11,532.5H6Z" fill="#f0f0f0"/>
<path d="M10,555L16,550.5M10,555L16,560" stroke="#d0d0d0" stroke-width="1.1" fill="none"/><rect x="5" y="553" width="4" height="4" fill="#c8c8c8"/><rect x="15" y="548.5" width="4" height="4" fill="#e8e8e8"/><rect x="15" y="558" width="4" height="4" fill="#e8e8e8"/>
<rect x="5" y="572" width="7" height="7" fill="#7a7a7a"/><rect x="12" y="572" width="7" height="7" fill="#eaeaea"/><rect x="5" y="579" width="7" height="7" fill="#cfcfcf"/><rect x="12" y="579" width="7" height="7" fill="#9a9a9a"/>
</svg>
<div style="left:100px;top:496px;width:10px;height:325px;background:#232323"></div>
<div class="sbt" style="left:101px;top:497px;width:8px;height:8px"></div>
<div class="sbt" style="left:101px;top:506px;width:8px;height:62px"></div>
<div class="sbt" style="left:101px;top:801px;width:8px;height:8px"></div>
<div style="left:1px;top:809px;width:99px;height:12px;background:#232323"></div>
<div class="sbt" style="left:2px;top:811px;width:8px;height:9px"></div>
<div class="sbt" style="left:11px;top:811px;width:78px;height:9px"></div>
<div class="sbt" style="left:91px;top:811px;width:8px;height:9px"></div>
<div style="left:100px;top:810px;width:10px;height:10px;background:#323232"></div>
<!--VIEW3D-->
<div class="pnl" style="left:249px;top:468px;width:337px;height:353px"></div>
<div class="dti" style="left:249px;top:452px"></div>
<div class="dtt ss" style="left:266px;top:452px;width:269px;line-height:19px;text-indent:-2px">3D View</div>
<svg style="left:536px;top:452px" width="50" height="16"><use href="#dbtn"/></svg>
<svg style="left:249px;top:452px" width="16" height="16" viewBox="0 0 16 16"><path d="M8,2.5L13.5,4.8V11L8,13.8L2.5,11V4.8Z" fill="#f4f4f4"/><path d="M2.5,4.8L8,7.2L13.5,4.8M8,7.2V13.8" stroke="#999" stroke-width="0.8" fill="none"/><path d="M8,7.2L13.5,4.8V11L8,13.8Z" fill="#d0d0d0"/></svg>
<div class="tb" style="left:249px;top:468px;width:337px;height:28px;border-bottom:1px solid #222"></div>
<div class="ss" style="left:258px;top:476px;color:#a8a8a8">Geometry</div>
<div class="ss" style="left:331px;top:476px;color:#a8a8a8">Materials</div>
<div class="ss" style="left:412px;top:476px;color:#a8a8a8">Lights</div>
<div class="ss" style="left:473px;top:476px;color:#a8a8a8">Camera</div>
<svg style="left:316px;top:479px" width="7" height="6"><use href="#tri"/></svg>
<svg style="left:395px;top:479px" width="7" height="6"><use href="#tri"/></svg>
<svg style="left:457px;top:479px" width="7" height="6"><use href="#tri"/></svg>
<svg style="left:519px;top:479px" width="7" height="6"><use href="#tri"/></svg>
<div class="ui" style="left:573px;top:472px;color:#0c0c0c;font-size:14px;line-height:18px;font-weight:bold">»</div>
<div style="left:249px;top:496px;width:23px;height:295px;background:#272727"></div>
<div style="left:251px;top:509px;width:19px;height:1px;background:#151515"></div>
<svg style="left:255px;top:499px" width="9" height="9" viewBox="0 0 11 11"><path d="M5,1.5H1.5V9.5H9.5V6" fill="none" stroke="#c8c8c8" stroke-width="1.2"/><path d="M5,6L9.5,1.5M6.2,1.2H9.8V4.8" fill="none" stroke="#c8c8c8" stroke-width="1.2"/></svg>
<div style="left:251px;top:511px;width:19px;height:24px;background:#a4a4a4;border-radius:3px"></div>
<svg style="left:251px;top:511px" width="19" height="24" viewBox="0 0 19 24"><circle cx="6.5" cy="8.5" r="2.6" fill="#e8e8e8"/><circle cx="12.5" cy="8.5" r="2.6" fill="#e8e8e8"/><rect x="5" y="11" width="9" height="6.5" fill="#ececec"/><path d="M14,13L17,11.5V17L14,15.5Z" fill="#ececec"/><circle cx="6.5" cy="8.5" r="1" fill="#999"/><circle cx="12.5" cy="8.5" r="1" fill="#999"/></svg>
<svg style="left:250px;top:537px" width="20" height="20" viewBox="0 0 20 20"><path d="M8,7L16,11.5L11,17.5Z" fill="#7a6a20" opacity="0.8"/><path d="M2,1.5L9.5,5.5L7.5,7L13.5,13L12.5,14L6.5,8L5,10Z" fill="#f0f0f0"/><path d="M6.2,6.2L9.5,7.5L7.2,9.8Z" fill="#f0d020"/></svg>
<svg id="img3d" style="left:272px;top:496px" width="314" height="295" viewBox="0 0 314 295">
<defs>
<radialGradient id="sky" cx="1.0" cy="0.0" r="0.36" gradientUnits="objectBoundingBox"><stop offset="0" stop-color="#b4d4f4"/><stop offset="0.4" stop-color="#cce2f7"/><stop offset="0.75" stop-color="#eef5fb"/><stop offset="1" stop-color="#fefefe"/></radialGradient>
<linearGradient id="field" x1="0" y1="0" x2="0" y2="1"><stop offset="0" stop-color="#b2a572"/><stop offset="0.14" stop-color="#a6986a"/><stop offset="0.28" stop-color="#8e8458"/><stop offset="0.44" stop-color="#706a44"/><stop offset="0.62" stop-color="#5e5a3a"/><stop offset="0.82" stop-color="#4e4a30"/><stop offset="1" stop-color="#403c24"/></linearGradient>
<linearGradient id="ctop" x1="0" y1="0" x2="1" y2="0"><stop offset="0" stop-color="#d2dae6"/><stop offset="0.18" stop-color="#f2f5f9"/><stop offset="0.4" stop-color="#ffffff"/><stop offset="0.8" stop-color="#f4f7fa"/><stop offset="1" stop-color="#c8d0dc"/></linearGradient>
<linearGradient id="cface" x1="0" y1="0" x2="0.5" y2="1"><stop offset="0" stop-color="#23231400"/><stop offset="0" stop-color="#15150e"/><stop offset="0.45" stop-color="#232013"/><stop offset="1" stop-color="#322d19"/></linearGradient>
<linearGradient id="lface" x1="0" y1="0" x2="0.25" y2="1"><stop offset="0" stop-color="#16170c" stop-opacity="0.75"/><stop offset="0.08" stop-color="#222212" stop-opacity="0.35"/><stop offset="0.5" stop-color="#2c2a16" stop-opacity="0.22"/><stop offset="1" stop-color="#2c2a16" stop-opacity="0.35"/></linearGradient>
<linearGradient id="lface2" x1="0.15" y1="0.5" x2="0.75" y2="0.42"><stop offset="0" stop-color="#1c1c0e" stop-opacity="0"/><stop offset="1" stop-color="#1c1c0e" stop-opacity="0.6"/></linearGradient>
<linearGradient id="edge" x1="0" y1="0" x2="0" y2="1"><stop offset="0" stop-color="#c4cede"/><stop offset="0.28" stop-color="#5c6c8c"/><stop offset="0.6" stop-color="#2c3850"/><stop offset="1" stop-color="#0e1218"/></linearGradient>
<radialGradient id="vig" cx="0.5" cy="0.3" r="0.9"><stop offset="0.6" stop-color="#000" stop-opacity="0"/><stop offset="1" stop-color="#000" stop-opacity="0.5"/></radialGradient>
<linearGradient id="fade" x1="0" y1="0" x2="0" y2="1"><stop offset="0" stop-color="#fff" stop-opacity="0"/><stop offset="0.25" stop-color="#fff" stop-opacity="1"/></linearGradient>
<mask id="mk"><rect x="0" y="60" width="314" height="235" fill="url(#fade)"/></mask>
<filter id="nz" x="0" y="0" width="100%" height="100%"><feTurbulence type="fractalNoise" baseFrequency="0.09 0.16" numOctaves="4" seed="7"/><feColorMatrix type="matrix" values="0 0 0 0 0.12  0 0 0 0 0.11  0 0 0 0 0.05  2.8 0 0 0 -0.95"/></filter>
<filter id="nz2" x="0" y="0" width="100%" height="100%"><feTurbulence type="fractalNoise" baseFrequency="0.10 0.2" numOctaves="3" seed="3"/><feColorMatrix type="matrix" values="0 0 0 0 0.70  0 0 0 0 0.66  0 0 0 0 0.46  0 2.2 0 0 -1.0"/></filter>
<filter id="bl"><feGaussianBlur stdDeviation="1"/></filter>
<filter id="bl2"><feGaussianBlur stdDeviation="2.5"/></filter>
<clipPath id="cl"><rect x="0" y="0" width="314" height="295"/></clipPath>
<clipPath id="clf"><path d="M101,103L282,82L261,148L239,202L136,289L118,204L105,144Z"/></clipPath>
</defs>
<g clip-path="url(#cl)">
<rect width="314" height="295" fill="url(#sky)"/>
<!-- distant hills -->
<path d="M-6,52C20,52 36,50 62,50S98,50 122,56L160,60L205,56L320,50V90H-6Z" fill="#5e6c5c" filter="url(#bl)"/>
<path d="M-6,59L40,60L125,62L170,64V80H-6Z" fill="#8e966c" filter="url(#bl)"/>
<path d="M150,60L185,56L215,52L215,70L160,72Z" fill="#78846a" filter="url(#bl)"/>
<!-- field -->
<path d="M-6,62L60,63L125,66L175,69L230,60L320,52V295H-6Z" fill="url(#field)"/>
<path d="M-6,63L120,67L150,71L60,75L-6,73Z" fill="#c0b27c" opacity="0.8" filter="url(#bl)"/>
<path d="M-8,78L70,80L60,88L-8,92Z" fill="#a88060" opacity="0.4" filter="url(#bl2)"/>
<path d="M175,69L230,60L320,52V120L250,84Z" fill="#a0925a" opacity="0.8" filter="url(#bl)"/>
<g mask="url(#mk)">
<rect x="0" y="60" width="314" height="235" filter="url(#nz)"/>
<rect x="0" y="60" width="314" height="235" filter="url(#nz2)" opacity="0.4"/>
</g>
<!-- trees -->
<g fill="#3c4452" filter="url(#bl)">
<path d="M230,56L234,46L237,40L240.6,34L244,40L247,44L250,52L252,48L255,38L258,31.5L261,38L263,46L265,44L268,36L271,31L274,29.5L278,34L281,40L284,50L287,46L290,36L293,30L296.5,26.5L300,32L302,40L304,36L307,28L310,23.5L314,22L320,22V54L270,56L240,58Z"/>
</g>
<g fill="#48583c" filter="url(#bl)"><path d="M178,70L181,63L186,59L190,63L193,59L197,55L202,60L206,54L210,50L213,48.5L217,52L221,57L226,52L230,50L234,51.5L238,50L242,49.5L246,53L250,56L222,63Z"/></g><g fill="#5a6236" filter="url(#bl)"><ellipse cx="11" cy="100" rx="10" ry="6.5"/><ellipse cx="73" cy="97" rx="7" ry="5"/><ellipse cx="26" cy="95" rx="4" ry="2"/></g>
<!-- cube -->
<path d="M57,77L101,103L105,144L118,204L135,289Z" fill="url(#lface)"/><path d="M57,77L101,103L105,144L118,204L135,289Z" fill="url(#lface2)"/>
<path d="M101,103L282,82L261,148L239,202L136,289L118,204L105,144Z" fill="url(#cface)"/>
<g clip-path="url(#clf)"><rect x="95" y="80" width="195" height="215" filter="url(#nz2)" opacity="0.10"/></g>
<path d="M57,75L118,71L266,75L283,78L102,99Z" fill="url(#ctop)"/>
<path d="M66,74L118,71.5L165,73L112,77L74,77Z" fill="#4c5444" opacity="0.8" filter="url(#bl)"/><path d="M200,73.5L266,75L283,78L252,81.5L214,78Z" fill="#2c342c" opacity="0.92" filter="url(#bl)"/>
<path d="M100,96.5L283,77L282,85L102,109Z" fill="url(#edge)"/>
<path d="M56,75.5L100,96.5L102,109L80,95L58,79.5Z" fill="#232a3a"/>
<path d="M57,76.5L100,98L283,78" fill="none" stroke="#dce4f0" stroke-width="1.2" opacity="0.9"/>
<rect y="60" width="314" height="235" fill="url(#vig)"/>
</g>
</svg>
<svg style="left:252px;top:800px" width="15" height="14" viewBox="0 0 15 14"><path d="M3,2.5H5.5V11.5H9M5.5,4.5H9M5.5,7.5H9" fill="none" stroke="#dcdcdc" stroke-width="0.9"/><rect x="0.6" y="1.1" width="2.6" height="2.6" fill="#333" stroke="#f4f4f4" stroke-width="0.9"/><rect x="10.4" y="3.2" width="2.6" height="2.6" fill="#333" stroke="#f4f4f4" stroke-width="0.9"/><rect x="10.4" y="7.2" width="2.6" height="2.6" fill="#333" stroke="#f4f4f4" stroke-width="0.9"/><rect x="10.2" y="11" width="1.2" height="1.2" fill="#f4f4f4"/></svg>
<div style="left:249px;top:791px;width:337px;height:1px;background:#151515"></div>
<div class="sep" style="left:586px;top:452px;width:4px;height:368px"></div>
<!--VIEW2D-->
<div class="pnl" style="left:590px;top:468px;width:390px;height:353px"></div>
<div class="dti" style="left:590px;top:452px"></div>
<div class="dtt ss" style="left:607px;top:452px;width:321px;line-height:19px">Grayscale Conversion</div>
<svg style="left:929px;top:452px" width="50" height="16"><use href="#dbtn"/></svg>
<svg style="left:590px;top:452px" width="16" height="16" viewBox="0 0 16 16"><circle cx="5" cy="5" r="2.3" fill="#a8a8a8"/><circle cx="10.5" cy="5.2" r="2.6" fill="#c8c8c8"/><path d="M2,8H8V14H2Z" fill="#8c8c8c"/><path d="M7.5,8.5H13.5V14H7.5Z" fill="#b8b8b8"/><path d="M11,10.5H14.5V13.5H11Z" fill="#e8e8e8"/></svg>
<div class="tb" style="left:590px;top:468px;width:390px;height:27px"></div>
<div style="left:590px;top:495px;width:390px;height:296px;background:#000"></div>
<svg style="left:590px;top:468px" width="160" height="27" viewBox="590 468.7 160 27">
<path d="M594,477L601,476V488H594Z" fill="#b8b8b8"/><path d="M601,476L608,477V488H601Z" fill="#8c8c8c"/><path d="M603,480L607,488" stroke="#e8e8e8" stroke-width="0.9"/><text x="595.5" y="483" font-size="5.5" font-family="Liberation Sans,sans-serif" fill="#555">A</text><text x="603.5" y="487.5" font-size="5" font-family="Liberation Sans,sans-serif" fill="#eee">B</text>
<path d="M620,477.5H630V488H620Z" fill="#b0b0b0"/><rect x="622" y="483.5" width="6" height="4.5" fill="#7a7a7a"/><rect x="622" y="477.5" width="6" height="3.5" fill="#888"/><path d="M626,483L631.5,476.5L633,478L628,484Z" fill="#dcdcdc"/>
<path d="M648,483L654,478.5M648,483L654,488M648,483H652" stroke="#686868" stroke-width="1"/><circle cx="647.5" cy="483" r="2" fill="#404040" stroke="#6c6c6c" stroke-width="1"/><circle cx="654.5" cy="478.5" r="1.8" fill="#6c6c6c"/><circle cx="654.5" cy="488" r="1.8" fill="#6c6c6c"/><path d="M662,487H668L665,491.5Z" fill="#5c5c5c"/>
<path d="M679,478.5H692V488.5H679Z" fill="#c4c4c4"/><circle cx="685.5" cy="483.7" r="3" fill="#666"/><circle cx="685.5" cy="483.7" r="1.5" fill="#ddd"/><rect x="681" y="477" width="4" height="2" fill="#c4c4c4"/><rect x="689.3" y="480" width="1.8" height="1.6" fill="#555"/>
<text x="704" y="488" font-size="11" font-family="Liberation Sans,sans-serif" fill="#5e5e5e" textLength="12" lengthAdjust="spacingAndGlyphs">UV</text>
<path d="M726,481H732L729,485.8Z" fill="#585858"/>
</svg>
<svg style="left:590px;top:791px" width="390" height="30" viewBox="590 791 390 30">
<rect x="593" y="798" width="16" height="16" fill="#111"/><rect x="594.5" y="799.5" width="4.4" height="13" fill="#d03c3c"/><rect x="598.9" y="799.5" width="4.3" height="13" fill="#3cb43c"/><rect x="603.2" y="799.5" width="4.3" height="13" fill="#4848d8"/>
<path d="M613,803H619.2L616.1,808Z" fill="#c0c0c0"/>
<rect x="627.5" y="794" width="19.5" height="24" rx="3" fill="#a6a6a6"/><rect x="630" y="798.5" width="15" height="15" fill="#fff" stroke="#222" stroke-width="1"/>
<g fill="#bdbdbd"><rect x="630.5" y="799" width="3.5" height="3.5"/><rect x="637.5" y="799" width="3.5" height="3.5"/><rect x="634" y="802.5" width="3.5" height="3.5"/><rect x="641" y="802.5" width="3.5" height="3.5"/><rect x="630.5" y="806" width="3.5" height="3.5"/><rect x="637.5" y="806" width="3.5" height="3.5"/><rect x="634" y="809.5" width="3.5" height="3.5"/><rect x="641" y="809.5" width="3.5" height="3.5"/></g>
<defs><filter id="cb" x="-30%" y="-30%" width="160%" height="160%"><feGaussianBlur stdDeviation="0.9"/></filter><linearGradient id="g3" x1="0" y1="0" x2="1" y2="0"><stop offset="0" stop-color="#c84a3a"/><stop offset="0.45" stop-color="#48b050"/><stop offset="1" stop-color="#4a5ac8"/></linearGradient></defs>
<rect x="654" y="798" width="16.5" height="16" fill="#111"/><rect x="655.5" y="799.5" width="13.5" height="13" fill="url(#g3)"/>
<rect x="678" y="794" width="19" height="24" rx="3" fill="#a2a2a2"/>
<text x="679.5" y="810" font-family="Liberation Sans,sans-serif" font-weight="bold" font-size="10.5" textLength="16.5" lengthAdjust="spacingAndGlyphs"><tspan fill="#888" font-size="7.5">s</tspan><tspan fill="#d43030">R</tspan><tspan fill="#30a030">G</tspan><tspan fill="#3c3cd8">B</tspan></text>
<rect x="703" y="794" width="19" height="24" rx="3" fill="#a2a2a2"/>
<g filter="url(#cb)"><path d="M712.5,799.5A6,6 0 0 0 712.5,811.5Z" fill="#d03838"/><path d="M712.5,799.5A6,6 0 0 1 712.5,811.5Z" fill="#3848d0"/></g><ellipse cx="712.5" cy="805.5" rx="2.4" ry="6.2" fill="#38a838"/>
<text x="733.5" y="811" font-family="Liberation Serif,serif" font-style="italic" font-size="15" fill="#d8d8d8">i</text>
<path d="M756,812V799.5L757.5,803L758.5,801.5L759.8,805L760.8,803.5L762,806.5L763,805.5L764.2,808L765.5,809.5L767,812Z" fill="#d8c078"/><path d="M757.6,812V804M759.9,812V806M762.1,812V807.5M764.3,812V809" stroke="#323232" stroke-width="0.7"/><path d="M755.5,812.5H769" stroke="#e8d08a" stroke-width="1"/>
<rect x="801.5" y="800.5" width="9" height="9" fill="#6e6e6e"/>
<path d="M800.5,803V799.5H804M808,799.5H811.5V803M811.5,807V810.5H808M804,810.5H800.5V807" fill="none" stroke="#b4b4b4" stroke-width="1.3"/>
<text x="819.5" y="808.5" font-family="Liberation Sans,sans-serif" font-weight="bold" font-size="8.5" fill="#cfcfcf" letter-spacing="-0.3">1:1</text>
<path d="M839.5,794V818M956.5,794V818" stroke="#484848" stroke-width="1"/>
<circle cx="853" cy="805" r="4.2" fill="#8a8a8a"/><path d="M850.6,805H855.4" stroke="#fff" stroke-width="1.3"/>
<rect x="863" y="798" width="70" height="15" fill="#2c2c2c"/>
<circle cx="942" cy="805" r="4.2" fill="#8a8a8a"/><path d="M939.6,805H944.4M942,802.6V807.4" stroke="#fff" stroke-width="1.3"/>
<rect x="961" y="794" width="19" height="24" rx="3" fill="#a6a6a6"/>
<path d="M968,804V801.5C968,799.5 973,799.5 973,801.5V804" fill="none" stroke="#e8e8e8" stroke-width="1.2"/><rect x="966.8" y="804" width="7.4" height="7.5" fill="#ececec"/><path d="M968,807.5H973M970.5,807.5V810" stroke="#aaa" stroke-width="0.8"/>
</svg>
<div class="ss" style="left:863px;top:799px;width:70px;text-align:center;color:#bcbcbc">100.00%</div>
<!--STATUS-->
<div style="left:1px;top:821px;width:1179px;height:20px;background:#323232"></div>
<div style="left:1px;top:820px;width:1179px;height:1px;background:#181818"></div>
<div style="left:914px;top:824px;width:128px;height:14px;background:#414141"></div>
<div class="ss" style="left:1048px;top:825px;color:#e8e8e8">Engine: Direct3D 10</div>
<!-- window border -->
<div style="left:0;top:0;width:1181px;height:1px;background:#e3a55b"></div>
<div style="left:0;top:0;width:1px;height:843px;background:#e3a55b"></div>
<div style="left:1180px;top:0;width:1px;height:843px;background:#e3a55b"></div>
<div style="left:0;top:841px;width:1181px;height:1px;background:#8f6c45"></div><div style="left:0;top:842px;width:1181px;height:1px;background:#e3a55b"></div>
</div>
</body>
</html>
